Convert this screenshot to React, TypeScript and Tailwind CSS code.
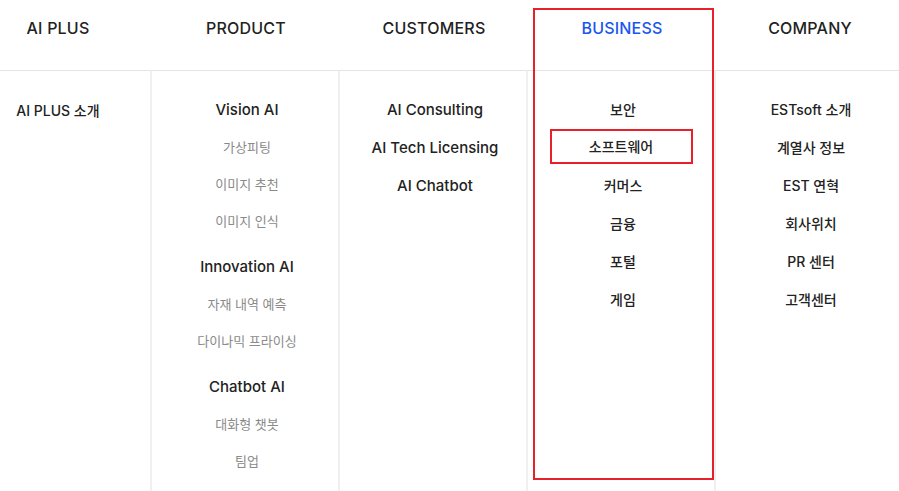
import React from "react";

const font = { fontFamily: "Inter, 'Noto Sans CJK KR', sans-serif" };

type Item = { t: string; sub?: boolean; gap?: boolean };

const product: Item[] = [
  { t: "Vision AI" },
  { t: "가상피팅", sub: true },
  { t: "이미지 추천", sub: true },
  { t: "이미지 인식", sub: true },
  { t: "Innovation AI", gap: true },
  { t: "자재 내역 예측", sub: true },
  { t: "다이나믹 프라이싱", sub: true },
  { t: "Chatbot AI", gap: true },
  { t: "대화형 챗봇", sub: true },
  { t: "팀업", sub: true },
];

function Header({ label, active }: { label: string; active?: boolean }) {
  return (
    <div
      className={
        "h-[70px] pb-[14px] flex items-center justify-center pl-[4px] text-[16px] font-medium tracking-[0.2px] " +
        (active ? "text-[#1a56f0]" : "text-[#222]")
      }
    >
      {label}
    </div>
  );
}

function Row({ children, h }: { children: React.ReactNode; h: string }) {
  return <div className={"flex items-center justify-center pl-[4px] " + h}>{children}</div>;
}

export default function App() {
  return (
    <div className="w-[899px] h-[491px] overflow-hidden bg-white" style={font}>
      <div className="flex -ml-[38px] w-[940px] h-[491px]">
        {/* AI PLUS */}
        <div className="w-[188px] flex flex-col">
          <Header label="AI PLUS" />
          <div className="flex-1 border-t border-[#e4e4e4] pt-[20px]">
            <Row h="h-[38px]">
              <span className="text-[14px] font-medium text-[#222]">AI PLUS 소개</span>
            </Row>
          </div>
        </div>
        {/* PRODUCT */}
        <div className="w-[188px] flex flex-col">
          <Header label="PRODUCT" />
          <div className="flex-1 border-t border-[#e4e4e4] pt-[21px] border-l-2 border-l-[#f0f0f0]">
            {product.map((it, i) => (
              <div key={i} className={it.gap ? "mt-[9px]" : ""}>
                <Row h="h-[37px]">
                  {it.sub ? (
                    <span className="text-[13px] text-[#8a8a8a]">{it.t}</span>
                  ) : (
                    <span className="text-[15px] font-medium text-[#222]">{it.t}</span>
                  )}
                </Row>
              </div>
            ))}
          </div>
        </div>
        {/* CUSTOMERS */}
        <div className="w-[188px] flex flex-col">
          <Header label="CUSTOMERS" />
          <div className="flex-1 border-t border-[#e4e4e4] pt-[20px] border-l-2 border-l-[#f0f0f0]">
            {["AI Consulting", "AI Tech Licensing", "AI Chatbot"].map((t) => (
              <Row key={t} h="h-[38px]">
                <span className="text-[15px] font-medium text-[#222]">{t}</span>
              </Row>
            ))}
          </div>
        </div>
        {/* BUSINESS */}
        <div className="w-[188px] flex flex-col relative">
          <Header label="BUSINESS" active />
          <div className="flex-1 border-t border-[#e4e4e4] pt-[19px] border-l-2 border-l-[#f0f0f0]">
            {["보안", "소프트웨어", "커머스", "금융", "포털", "게임"].map((t, i) => (
              <Row key={t} h="h-[38px]">
                {i === 1 ? (
                  <span className="w-[143px] h-[35px] -mt-[1px] border-2 border-[#e8202a] flex items-center justify-center text-[14px] font-medium text-[#222] -ml-[4px]">
                    {t}
                  </span>
                ) : (
                  <span className="text-[14px] font-medium text-[#222]">{t}</span>
                )}
              </Row>
            ))}
          </div>
          <div className="absolute left-[7px] top-[8px] w-[181px] h-[472px] border-2 border-[#e8202a] pointer-events-none" />
        </div>
        {/* COMPANY */}
        <div className="w-[188px] flex flex-col">
          <Header label="COMPANY" />
          <div className="flex-1 border-t border-[#e4e4e4] pt-[19px] border-l-2 border-l-[#f0f0f0]">
            {["ESTsoft 소개", "계열사 정보", "EST 연혁", "회사위치", "PR 센터", "고객센터"].map((t) => (
              <Row key={t} h="h-[38px]">
                <span className="text-[14px] font-medium text-[#222]">{t}</span>
              </Row>
            ))}
          </div>
        </div>
      </div>
    </div>
  );
}
